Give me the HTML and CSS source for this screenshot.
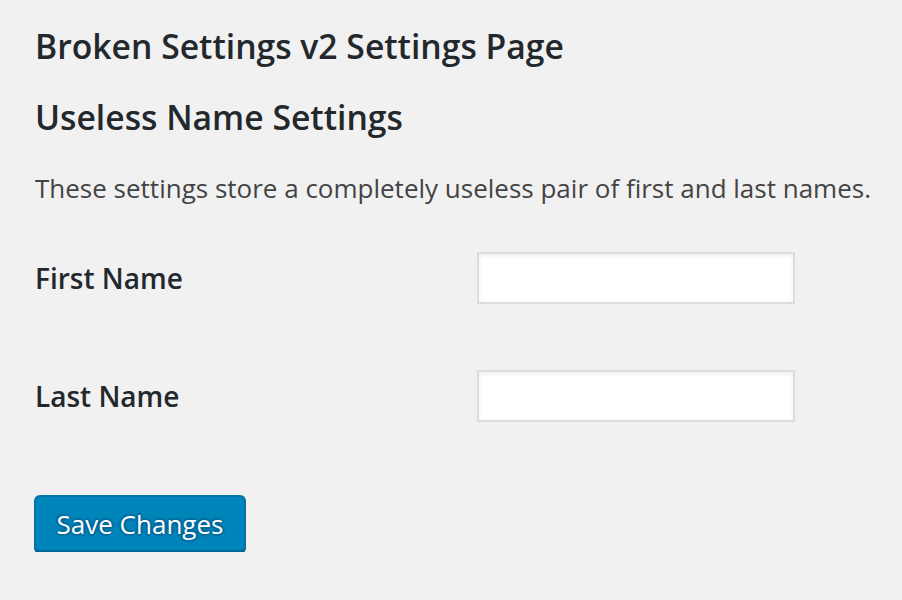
FILE: index.html
```html
<!DOCTYPE html>
<html>
<head>
<meta charset="utf-8">
<link rel="stylesheet" href="styles.css">
</head>
<body>
<div class="wrap">
  <h1 class="title">Broken Settings v2 Settings Page</h1>
  <h2 class="section">Useless Name Settings</h2>
  <p class="desc">These settings store a completely useless pair of first and last names.</p>
  <form class="form">
    <div class="row">
      <label class="label" for="first">First Name</label>
      <input class="field" id="first" type="text">
    </div>
    <div class="row">
      <label class="label" for="last">Last Name</label>
      <input class="field" id="last" type="text">
    </div>
    <div class="submit">
      <button class="button" type="button">Save Changes</button>
    </div>
  </form>
</div>
</body>
</html>
```
FILE: styles.css
```css
html, body {
  margin: 0;
  padding: 0;
  background: #f1f1f1;
}
body {
  font-family: "Open Sans", "Liberation Sans", sans-serif;
  color: #23282d;
}
.wrap {
  padding: 24px 0 0 34px;
}
.title {
  margin: 0 0 0 1px;
  font-size: 33.7px;
  line-height: 44px;
  font-weight: 600;
}
.section {
  margin: 27px 0 0 1px;
  font-size: 33.7px;
  line-height: 44px;
  font-weight: 600;
}
.desc {
  margin: 31px 0 0 1px;
  font-size: 26px;
  line-height: 36px;
  color: #444;
}
.form {
  margin: 46px 0 0;
  display: flex;
  flex-direction: column;
  gap: 66px;
}
.row {
  display: grid;
  grid-template-columns: 443px 318px;
  align-items: center;
}
.label {
  padding-left: 1px;
  font-size: 28px;
  font-weight: 600;
  color: #23282d;
}
.field {
  box-sizing: border-box;
  width: 318px;
  height: 52px;
  margin: 0;
  border: 2px solid #ddd;
  background: #fff;
  box-shadow: inset 0 2px 4px rgba(0,0,0,0.07);
  outline: none;
}
.submit {
  margin-top: 7px;
}
.button {
  box-sizing: border-box;
  width: 212px;
  height: 57px;
  padding: 0;
  font-family: "Open Sans", "Liberation Sans", sans-serif;
  font-size: 26px;
  color: #fff;
  background: #0085ba;
  border: 2px solid #0073aa;
  border-bottom-color: #006799;
  border-radius: 6px;
  box-shadow: 0 2px 0 #006799;
  text-shadow: 0 -2px 2px #006799, 2px 0 2px #006799, -2px 0 2px #006799, 0 2px 2px #006799;
}
```
